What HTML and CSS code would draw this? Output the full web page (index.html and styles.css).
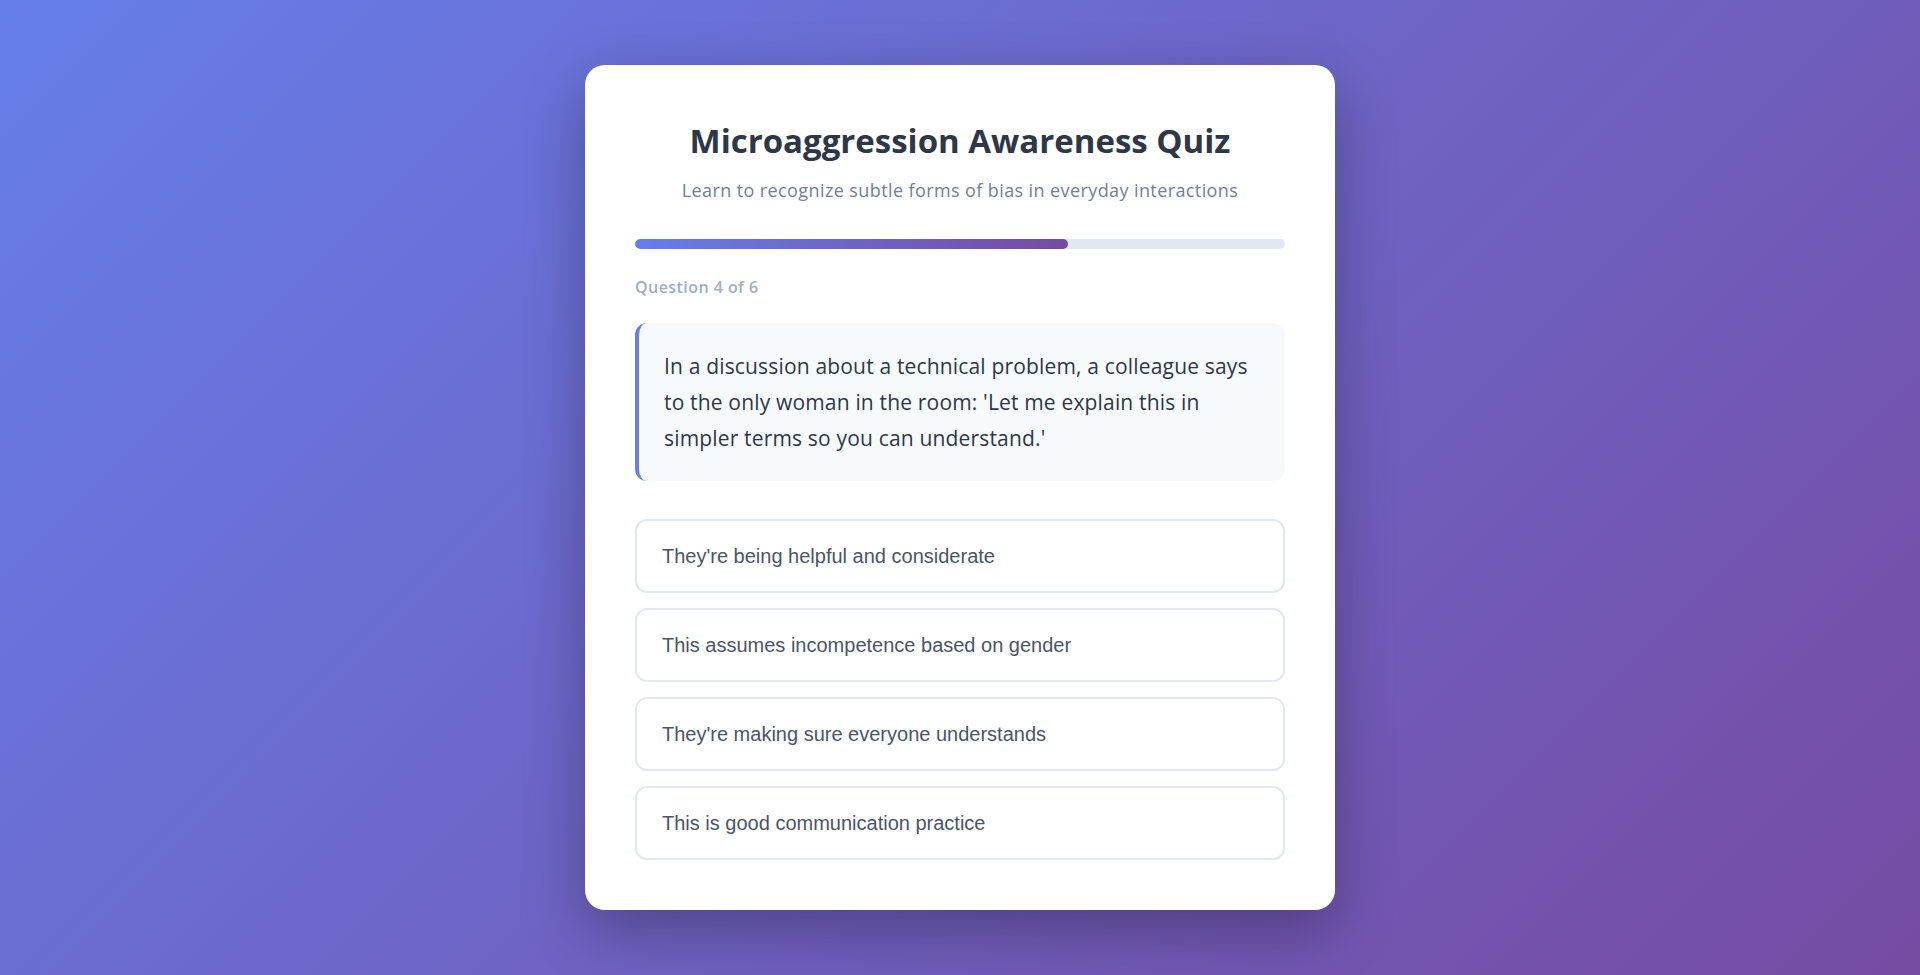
FILE: index.html
```html
<!DOCTYPE html>
<html lang="en">
<head>
<meta charset="utf-8">
<title>Microaggression Awareness Quiz</title>
<link rel="stylesheet" href="styles.css">
</head>
<body>
<main class="card">
  <h1 class="title">Microaggression Awareness Quiz</h1>
  <p class="subtitle">Learn to recognize subtle forms of bias in everyday interactions</p>
  <div class="progress"><div class="progress-fill" style="width: 66.67%"></div></div>
  <div class="counter">Question 4 of 6</div>
  <div class="question">In a discussion about a technical problem, a colleague says to the only woman in the room: 'Let me explain this in simpler terms so you can understand.'</div>
  <div class="options">
    <button class="option">They're being helpful and considerate</button>
    <button class="option">This assumes incompetence based on gender</button>
    <button class="option">They're making sure everyone understands</button>
    <button class="option">This is good communication practice</button>
  </div>
</main>
</body>
</html>
```
FILE: styles.css
```css
* { box-sizing: border-box; }
html, body { margin: 0; padding: 0; }
body {
  min-height: 100vh;
  display: flex;
  align-items: center;
  justify-content: center;
  background: linear-gradient(135deg, #667eea 0%, #764ba2 100%);
  font-family: "Open Sans", "Noto Sans", sans-serif;
}
.card {
  width: 750px;
  background: #ffffff;
  border-radius: 20px;
  padding: 50px;
  box-shadow: 0 20px 60px rgba(0, 0, 0, 0.3);
}
.title {
  margin: 0;
  font-size: 33px;
  line-height: 52px;
  font-weight: 700;
  color: #2d3748;
  text-align: center;
}
.subtitle {
  margin: 9px 0 0;
  font-size: 18px;
  letter-spacing: 0.4px;
  line-height: 28px;
  color: #718096;
  text-align: center;
}
.progress {
  margin-top: 35px;
  height: 10px;
  background: #e2e8f0;
  border-radius: 10px;
  overflow: hidden;
}
.progress-fill {
  height: 100%;
  border-radius: 10px;
  background: linear-gradient(90deg, #667eea, #764ba2);
}
.counter {
  margin-top: 26px;
  font-size: 16px;
  letter-spacing: 0.45px;
  line-height: 24px;
  font-weight: 600;
  color: #a0aec0;
}
.question {
  margin-top: 24px;
  background: #f7fafc;
  border-left: 4px solid #667eea;
  border-radius: 12px;
  padding: 25px;
  font-size: 21px;
  letter-spacing: 0.17px;
  line-height: 36px;
  color: #2d3748;
}
.options {
  margin-top: 38px;
  display: flex;
  flex-direction: column;
  gap: 15px;
}
.option {
  display: block;
  width: 100%;
  text-align: left;
  background: #ffffff;
  border: 2px solid #e2e8f0;
  border-radius: 12px;
  padding: 24px 25px;
  font-family: "Liberation Sans", Arial, sans-serif;
  font-size: 20px;
  line-height: 22px;
  color: #4a5568;
  cursor: pointer;
}
```
